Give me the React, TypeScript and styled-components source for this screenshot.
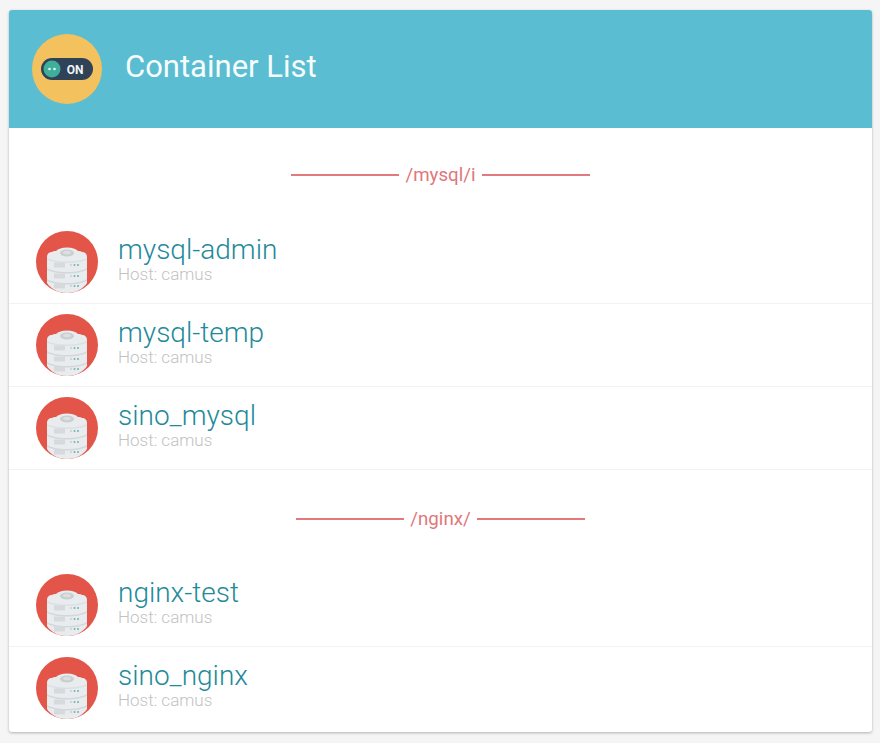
import styled, { createGlobalStyle } from 'styled-components'

const groups = [
  { name: '/mysql/i', dividerHeight: 93, dividerPad: 0, rows: ['mysql-admin', 'mysql-temp', 'sino_mysql'] },
  { name: '/nginx/', dividerHeight: 94, dividerPad: 3, rows: ['nginx-test', 'sino_nginx'] },
]

function ToggleLogo() {
  return (
    <LogoSvg viewBox="0 0 70 70">
      <circle cx="35" cy="35" r="35" fill="#f3c25f" />
      <rect x="9" y="24" width="52" height="22" rx="11" fill="#2f4257" />
      <circle cx="20" cy="35" r="8.5" fill="#3fae9b" />
      <circle cx="17.5" cy="35" r="1.3" fill="#e8f5f2" />
      <circle cx="22.5" cy="35" r="1.3" fill="#e8f5f2" />
      <text x="43" y="39.5" textAnchor="middle" fontFamily="Roboto, sans-serif" fontWeight="700" fontSize="12" fill="#f2f4f5">
        ON
      </text>
    </LogoSvg>
  )
}

function ServerAvatar() {
  return (
    <AvatarSvg viewBox="0 0 62 62">
      <circle cx="31" cy="31" r="31" fill="#e35549" />
      <path
        d="M11 26c0-3 2-5 5-5 1-1 2-1 4-1 2-2 6-3.500 11-3.500s9 1.500 11 3.500c2 0 3 0 4 1 3 0 5 2 5 5v26c-4 6-11 10-20 10s-16-4-20-10z"
        fill="#e9ecee"
      />
      <path d="M11 37c4 2.500 11 4 20 4s16-1.500 20-4v1.500c-4 2.500-11 4-20 4s-16-1.500-20-4z" fill="#d3d7d9" />
      <path d="M11 48c4 2.500 11 4 20 4s16-1.500 20-4v1.500c-4 2.500-11 4-20 4s-16-1.500-20-4z" fill="#d3d7d9" />
      <path d="M11 27c4 2 11 3.500 20 3.500s16-1.500 20-3.500v1.500c-4 2-11 3.500-20 3.500s-16-1.500-20-3.500z" fill="#dde0e2" />
      <ellipse cx="31" cy="22" rx="7" ry="3.500" fill="#c9cecf" />
      <ellipse cx="31" cy="21.500" rx="4" ry="1.800" fill="#dbdfe0" />
      {[34, 45, 55].map(y => (
        <g key={y}>
          <rect x="18" y={y - 2.5} width="11" height="5" fill="#d6dadc" />
          <circle cx="35" cy={y} r="0.8" fill="#b3bcc0" />
          <circle cx="38.500" cy={y} r="1" fill="#6fb5aa" />
          <circle cx="42" cy={y} r="1" fill="#6fb5aa" />
        </g>
      ))}
    </AvatarSvg>
  )
}

export default function App() {
  return (
    <>
      <GlobalStyle />
      <Card>
        <Header>
          <ToggleLogo />
          <Title>Container List</Title>
        </Header>
        {groups.map(group => (
          <Group key={group.name}>
            <Divider $height={group.dividerHeight} $pad={group.dividerPad}>
              <span>{group.name}</span>
            </Divider>
            {group.rows.map(row => (
              <Row key={row}>
                <ServerAvatar />
                <RowText>
                  <RowName>{row}</RowName>
                  <RowHost>Host: camus</RowHost>
                </RowText>
              </Row>
            ))}
          </Group>
        ))}
      </Card>
    </>
  )
}

const GlobalStyle = createGlobalStyle`
  html, body {
    margin: 0;
    height: 743px;
    overflow: hidden;
    background: #f5f5f5;
    font-family: Roboto, "Liberation Sans", sans-serif;
  }
`

const Card = styled.div`
  margin: 10px 8px 0 9px;
  height: 722px;
  overflow: hidden;
  background: #fff;
  border-radius: 3px;
  box-shadow: 0 1px 3px rgba(0, 0, 0, 0.28);
`

const Header = styled.header`
  display: flex;
  align-items: center;
  height: 118px;
  padding-left: 23px;
  box-sizing: border-box;
  background: #5abdd1;
`

const LogoSvg = styled.svg`
  width: 70px;
  height: 70px;
  margin-right: 23px;
`

const Title = styled.h1`
  margin: 0 0 6px;
  font-size: 31px;
  font-weight: 400;
  line-height: 1;
  color: #f7fcfd;
`

const Group = styled.section``

const Divider = styled.div<{ $height: number; $pad: number }>`
  display: flex;
  align-items: center;
  justify-content: center;
  gap: 6px;
  height: ${props => props.$height}px;
  padding-top: ${props => props.$pad}px;
  box-sizing: border-box;
  font-size: 18.7px;
  color: #e0777a;

  &::before,
  &::after {
    content: '';
    width: 108px;
    height: 2px;
    background: #e27a7c;
  }
`

const Row = styled.div`
  display: flex;
  align-items: center;
  gap: 20px;
  height: 83px;
  padding: 0 0 0 27px;
  box-sizing: border-box;
  border-bottom: 1px solid #f2f2f2;

  ${Group}:last-child &:last-child {
    border-bottom-color: transparent;
  }
`

const AvatarSvg = styled.svg`
  flex: none;
  width: 62px;
  height: 62px;
`

const RowText = styled.div`
  display: flex;
  flex-direction: column;
  padding-bottom: 6px;
`

const RowName = styled.div`
  font-size: 28px;
  font-weight: 300;
  line-height: 30px;
  color: #1f8a9a;
`

const RowHost = styled.div`
  font-size: 17px;
  font-weight: 300;
  line-height: 18px;
  color: #c2c2c2;
`
